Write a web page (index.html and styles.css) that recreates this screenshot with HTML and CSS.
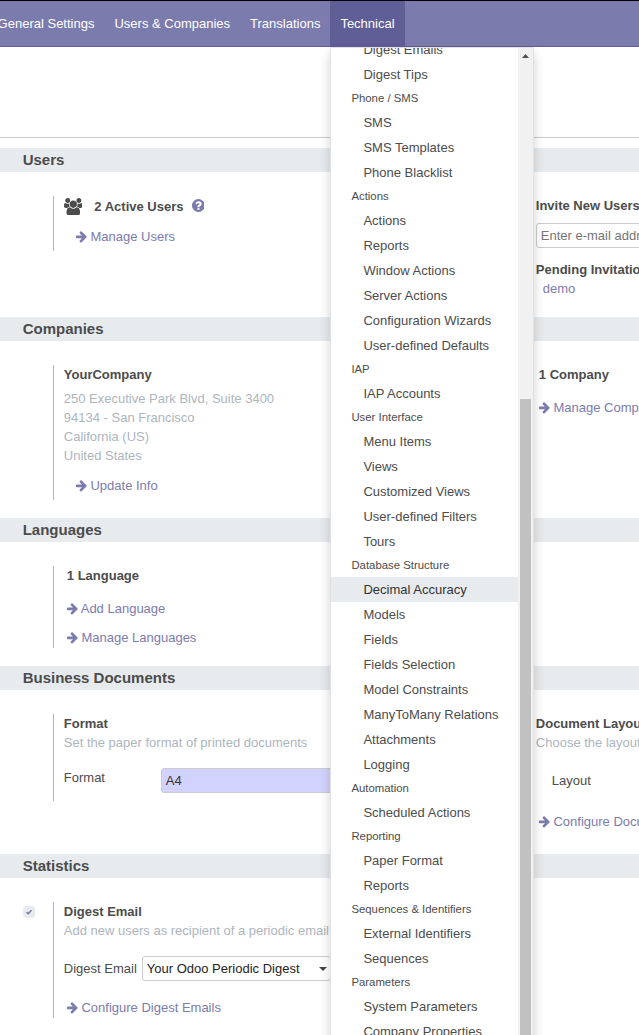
FILE: index.html
```html
<!DOCTYPE html>
<html lang="en">
<head>
<meta charset="utf-8">
<title>Settings</title>
<link rel="stylesheet" href="styles.css">
</head>
<body>
<svg class="defs" aria-hidden="true">
  <symbol id="arrow" viewBox="192 0 1536 1792"><path d="M1664 960q0 54-37 91l-651 651q-39 37-91 37-51 0-90-37l-75-75q-38-38-38-91t38-91l293-293h-704q-52 0-84.5-37.5t-32.5-90.5v-128q0-53 32.5-90.5t84.5-37.5h704l-293-294q-38-36-38-90t38-90l75-75q38-38 90-38 53 0 91 38l651 651q37 35 37 90z"/></symbol>
  <symbol id="users" viewBox="0 0 1920 1792"><path d="M593 896q-162 5-265 128H194q-82 0-138-40.5T0 865q0-353 124-353 6 0 43.5 21t97.5 42.5T384 597q67 0 133-23-5 37-5 66 0 139 81 256zm1071 637q0 120-73 189.5t-194 69.5H523q-121 0-194-69.5T256 1533q0-53 3.5-103.5t14-109T300 1212t43-97.5 62-81 85.5-53.5T602 960q10 0 43 21.5t73 48 107 48 135 21.5 135-21.5 107-48 73-48 43-21.5q61 0 111.5 20t85.5 53.5 62 81 43 97.5 26.5 108.5 14 109 3.5 103.5zM640 256q0 106-75 181t-181 75-181-75-75-181 75-181T384 0t181 75 75 181zm704 384q0 159-112.5 271.5T960 1024 688.5 911.5 576 640t112.5-271.5T960 256t271.5 112.5T1344 640zm576 225q0 78-56 118.5t-138 40.5h-134q-103-123-265-128 81-117 81-256 0-29-5-66 66 23 133 23 59 0 119-21.5t97.5-42.5 43.5-21q124 0 124 353zm-128-609q0 106-75 181t-181 75-181-75-75-181 75-181 181-75 181 75 75 181z"/></symbol>
  <symbol id="help" viewBox="128 0 1536 1792"><path d="M1024 1376v-192q0-14-9-23t-23-9h-192q-14 0-23 9t-9 23v192q0 14 9 23t23 9h192q14 0 23-9t9-23zm256-672q0-88-55.5-163t-138.5-116-170-41q-243 0-371 213-15 24 8 42l132 100q7 6 19 6 16 0 25-12 53-68 86-92 34-24 86-24 48 0 85.5 26t37.5 59q0 38-20 61t-68 45q-63 28-115.5 86.5t-52.5 125.5v36q0 14 9 23t23 9h192q14 0 23-9t9-23q0-19 21.5-49.5t54.5-49.5q32-18 49-28.5t46-35 44.5-48 28-60.5 12.5-81zm384 192q0 209-103 385.5t-279.5 279.5-385.5 103-385.5-103-279.5-279.5-103-385.5 103-385.5 279.5-279.5 385.5-103 385.5 103 279.5 279.5 103 385.5z"/></symbol>
</svg>

<nav class="navbar">
  <div class="nav-item">General Settings</div>
  <div class="nav-item">Users &amp; Companies</div>
  <div class="nav-item">Translations</div>
  <div class="nav-item active">Technical
    <div class="menu">
      <div class="menu-list">
        <div class="item first">Digest Emails</div>
        <div class="item">Digest Tips</div>
        <div class="group">Phone / SMS</div>
        <div class="item">SMS</div>
        <div class="item">SMS Templates</div>
        <div class="item">Phone Blacklist</div>
        <div class="group">Actions</div>
        <div class="item">Actions</div>
        <div class="item">Reports</div>
        <div class="item">Window Actions</div>
        <div class="item">Server Actions</div>
        <div class="item">Configuration Wizards</div>
        <div class="item">User-defined Defaults</div>
        <div class="group">IAP</div>
        <div class="item">IAP Accounts</div>
        <div class="group">User Interface</div>
        <div class="item">Menu Items</div>
        <div class="item">Views</div>
        <div class="item">Customized Views</div>
        <div class="item">User-defined Filters</div>
        <div class="item">Tours</div>
        <div class="group">Database Structure</div>
        <div class="item hover">Decimal Accuracy</div>
        <div class="item">Models</div>
        <div class="item">Fields</div>
        <div class="item">Fields Selection</div>
        <div class="item">Model Constraints</div>
        <div class="item">ManyToMany Relations</div>
        <div class="item">Attachments</div>
        <div class="item">Logging</div>
        <div class="group">Automation</div>
        <div class="item">Scheduled Actions</div>
        <div class="group">Reporting</div>
        <div class="item">Paper Format</div>
        <div class="item">Reports</div>
        <div class="group">Sequences &amp; Identifiers</div>
        <div class="item">External Identifiers</div>
        <div class="item">Sequences</div>
        <div class="group">Parameters</div>
        <div class="item">System Parameters</div>
        <div class="item">Company Properties</div>
      </div>
      <div class="scrollbar">
        <svg class="scroll-up" viewBox="0 0 7 4"><path d="M0 4h7L3.5 0z"/></svg>
        <div class="thumb"></div>
      </div>
    </div>
  </div>
</nav>

<div class="control-panel"></div>

<main class="settings">
  <section class="section users">
    <h2>Users</h2>
    <div class="row">
      <div class="pane">
        <div class="count-line">
          <svg class="icon-users"><use href="#users"/></svg>
          <b>2 Active Users</b>
          <svg class="icon-help"><use href="#help"/></svg>
        </div>
        <div class="link indent manage-users"><svg class="arrow"><use href="#arrow"/></svg> Manage Users</div>
      </div>
      <div class="pane">
        <b>Invite New Users</b>
        <div class="field invite">Enter e-mail address</div>
        <b>Pending Invitations:</b>
        <div class="link demo">demo</div>
      </div>
    </div>
  </section>

  <section class="section companies">
    <h2>Companies</h2>
    <div class="row">
      <div class="pane">
        <b>YourCompany</b>
        <div class="muted address">250 Executive Park Blvd, Suite 3400<br>94134 - San Francisco<br>California (US)<br>United States</div>
        <div class="link indent update"><svg class="arrow"><use href="#arrow"/></svg> Update Info</div>
      </div>
      <div class="pane">
        <b class="nudge">1 Company</b>
        <div class="link nudge after-count"><svg class="arrow"><use href="#arrow"/></svg> Manage Companies</div>
      </div>
    </div>
  </section>

  <section class="section languages">
    <h2>Languages</h2>
    <div class="row">
      <div class="pane">
        <b class="nudge">1 Language</b>
        <div class="link nudge after-count"><svg class="arrow"><use href="#arrow"/></svg> Add Language</div>
        <div class="link nudge next-link"><svg class="arrow"><use href="#arrow"/></svg> Manage Languages</div>
      </div>
    </div>
  </section>

  <section class="section documents">
    <h2>Business Documents</h2>
    <div class="row">
      <div class="pane">
        <b>Format</b>
        <div class="muted">Set the paper format of printed documents</div>
        <div class="form-row format-row">
          <span class="format-label">Format</span>
          <div class="field required">A4</div>
        </div>
      </div>
      <div class="pane">
        <b>Document Layout</b>
        <div class="muted">Choose the layout of your documents</div>
        <div class="layout-label">Layout</div>
        <div class="link nudge configure-layout"><svg class="arrow"><use href="#arrow"/></svg> Configure Document Layout</div>
      </div>
    </div>
  </section>

  <section class="section statistics">
    <h2>Statistics</h2>
    <div class="row">
      <div class="checkbox"><svg viewBox="0 0 12 12"><path d="M3.6 6.2 5.2 7.7 8.5 4.3"/></svg></div>
      <div class="pane">
        <b>Digest Email</b>
        <div class="muted">Add new users as recipient of a periodic email</div>
        <div class="form-row digest-row">
          <span class="digest-label">Digest Email</span>
          <div class="field select">Your Odoo Periodic Digest<svg class="caret" viewBox="0 0 8 4"><path d="M0 0h8L4 4z"/></svg></div>
        </div>
        <div class="link nudge configure-digest"><svg class="arrow"><use href="#arrow"/></svg> Configure Digest Emails</div>
      </div>
    </div>
  </section>
</main>
</body>
</html>
```
FILE: styles.css
```css
* { box-sizing: border-box; }

html, body { height: 100%; }

body {
  margin: 0;
  overflow: hidden;
  background: #fff;
  color: #4c4c4c;
  font: 13px/19px "Liberation Sans", Arial, sans-serif;
  white-space: nowrap;
}

.defs { display: none; }
svg { fill: currentColor; }
b { display: block; }

/* Top navigation */
.navbar {
  display: flex;
  height: 47px;
  margin-left: -12.4px;
  background: #7c7bad;
  border-top: 1px solid #000;
  border-bottom: 1px solid #5f5e97;
}
.nav-item {
  padding: 0 10px;
  line-height: 45px;
  color: #fff;
}
.nav-item.active {
  position: relative;
  background: #5f5e97;
}

/* Technical dropdown */
.menu {
  position: absolute;
  top: 46px;
  left: 0;
  z-index: 10;
  display: flex;
  width: 204px;
  height: 1000px;
  overflow: hidden;
  background: #fff;
  border: 1px solid #dee2e6;
  border-radius: 0 0 3px 3px;
  box-shadow: 0 6px 12px rgba(0, 0, 0, .175);
  color: #4c4c4c;
}
.menu-list { flex: 1; }
.item {
  height: 25px;
  padding-left: 32px;
  line-height: 25px;
}
.item.first { margin-top: -11px; }
.item.hover { background: #e7ebee; color: #333; }
.group {
  height: 23px;
  padding-left: 20px;
  font-size: 11.375px;
  line-height: 23px;
}
.scrollbar {
  display: flex;
  flex-direction: column;
  align-items: center;
  width: 15px;
  background: #f1f1f1;
}
.scroll-up {
  width: 7px;
  height: 4px;
  margin: 6px 0 341px;
  fill: #505050;
}
.thumb {
  flex: 1;
  width: 11px;
  background: #c1c1c1;
}

.control-panel {
  height: 91px;
  margin-bottom: 10px;
  border-bottom: 1px solid #ccc;
}

/* Settings sections */
.settings { overflow: hidden; }
.section h2 {
  height: 24px;
  margin: 0 0 24px;
  padding-left: 22.7px;
  background: #e7ebee;
  font-size: 15px;
  line-height: 24px;
}
.users { height: 169px; }
.companies { height: 201px; }
.languages { height: 148px; }
.documents { height: 188px; }

.row {
  display: grid;
  grid-template-columns: 472px 1fr;
  padding-left: 53px;
}
.pane {
  min-width: 0;
  padding-left: 9.8px;
  border-left: 1px solid #b5b5b5;
}
.users .pane { height: 55px; }
.companies .pane { height: 135px; }
.languages .pane { height: 82px; }
.documents .pane { height: 87px; }
.statistics .pane { height: 116px; }

.link { color: #7c7bad; }
.muted { color: #adb5bd; }
.indent { padding-left: 12px; }
.nudge { padding-left: 3px; }
.arrow {
  width: 11.14px;
  height: 13px;
  margin: 0 -.6px 0 .5px;
  vertical-align: -1.86px;
}

.count-line {
  display: flex;
  align-items: flex-start;
  height: 31px;
}
.count-line b { margin: 1px 8px 0 12px; }
.icon-users { width: 18.57px; height: 17.33px; margin-top: 2px; }
.icon-help { width: 12.86px; height: 15px; margin-top: 2.1px; color: #7c7bad; }

.field {
  height: 25px;
  padding: 0 4px;
  border: 1px solid #ccc;
  border-radius: 3px;
  line-height: 23px;
}
.invite {
  margin: 8px 0 12px;
  color: #757575;
  overflow: hidden;
  width: 300px;
}
.demo { padding-left: 7px; }

.address { margin-top: 5px; }
.update { margin-top: 11px; }
.after-count { margin-top: 14px; }
.next-link { margin-top: 10px; }

.form-row { display: flex; }
.format-row { margin-top: 16px; }
.format-label { width: 97px; }
.required { width: 240px; background: #d2d2ff; color: #333; }
.layout-label { margin-top: 19px; padding-left: 16px; }
.configure-layout { margin-top: 22px; }

.statistics .row {
  grid-template-columns: 30px 1fr;
  padding-left: 23px;
}
.checkbox {
  width: 12px;
  height: 12px;
  margin-top: 4px;
  background: #e7ebee;
  border-radius: 3px;
}
.checkbox svg {
  display: block;
  fill: none;
  stroke: #7c7bad;
  stroke-width: 1.6;
}
.digest-row { margin-top: 16px; }
.digest-label { width: 78px; padding-top: 3px; }
.select {
  display: flex;
  align-items: center;
  justify-content: space-between;
  width: 189px;
  padding-right: 3px;
  color: #222;
}
.caret { width: 8px; height: 4px; fill: #444; }
.configure-digest { margin-top: 17px; }
```
